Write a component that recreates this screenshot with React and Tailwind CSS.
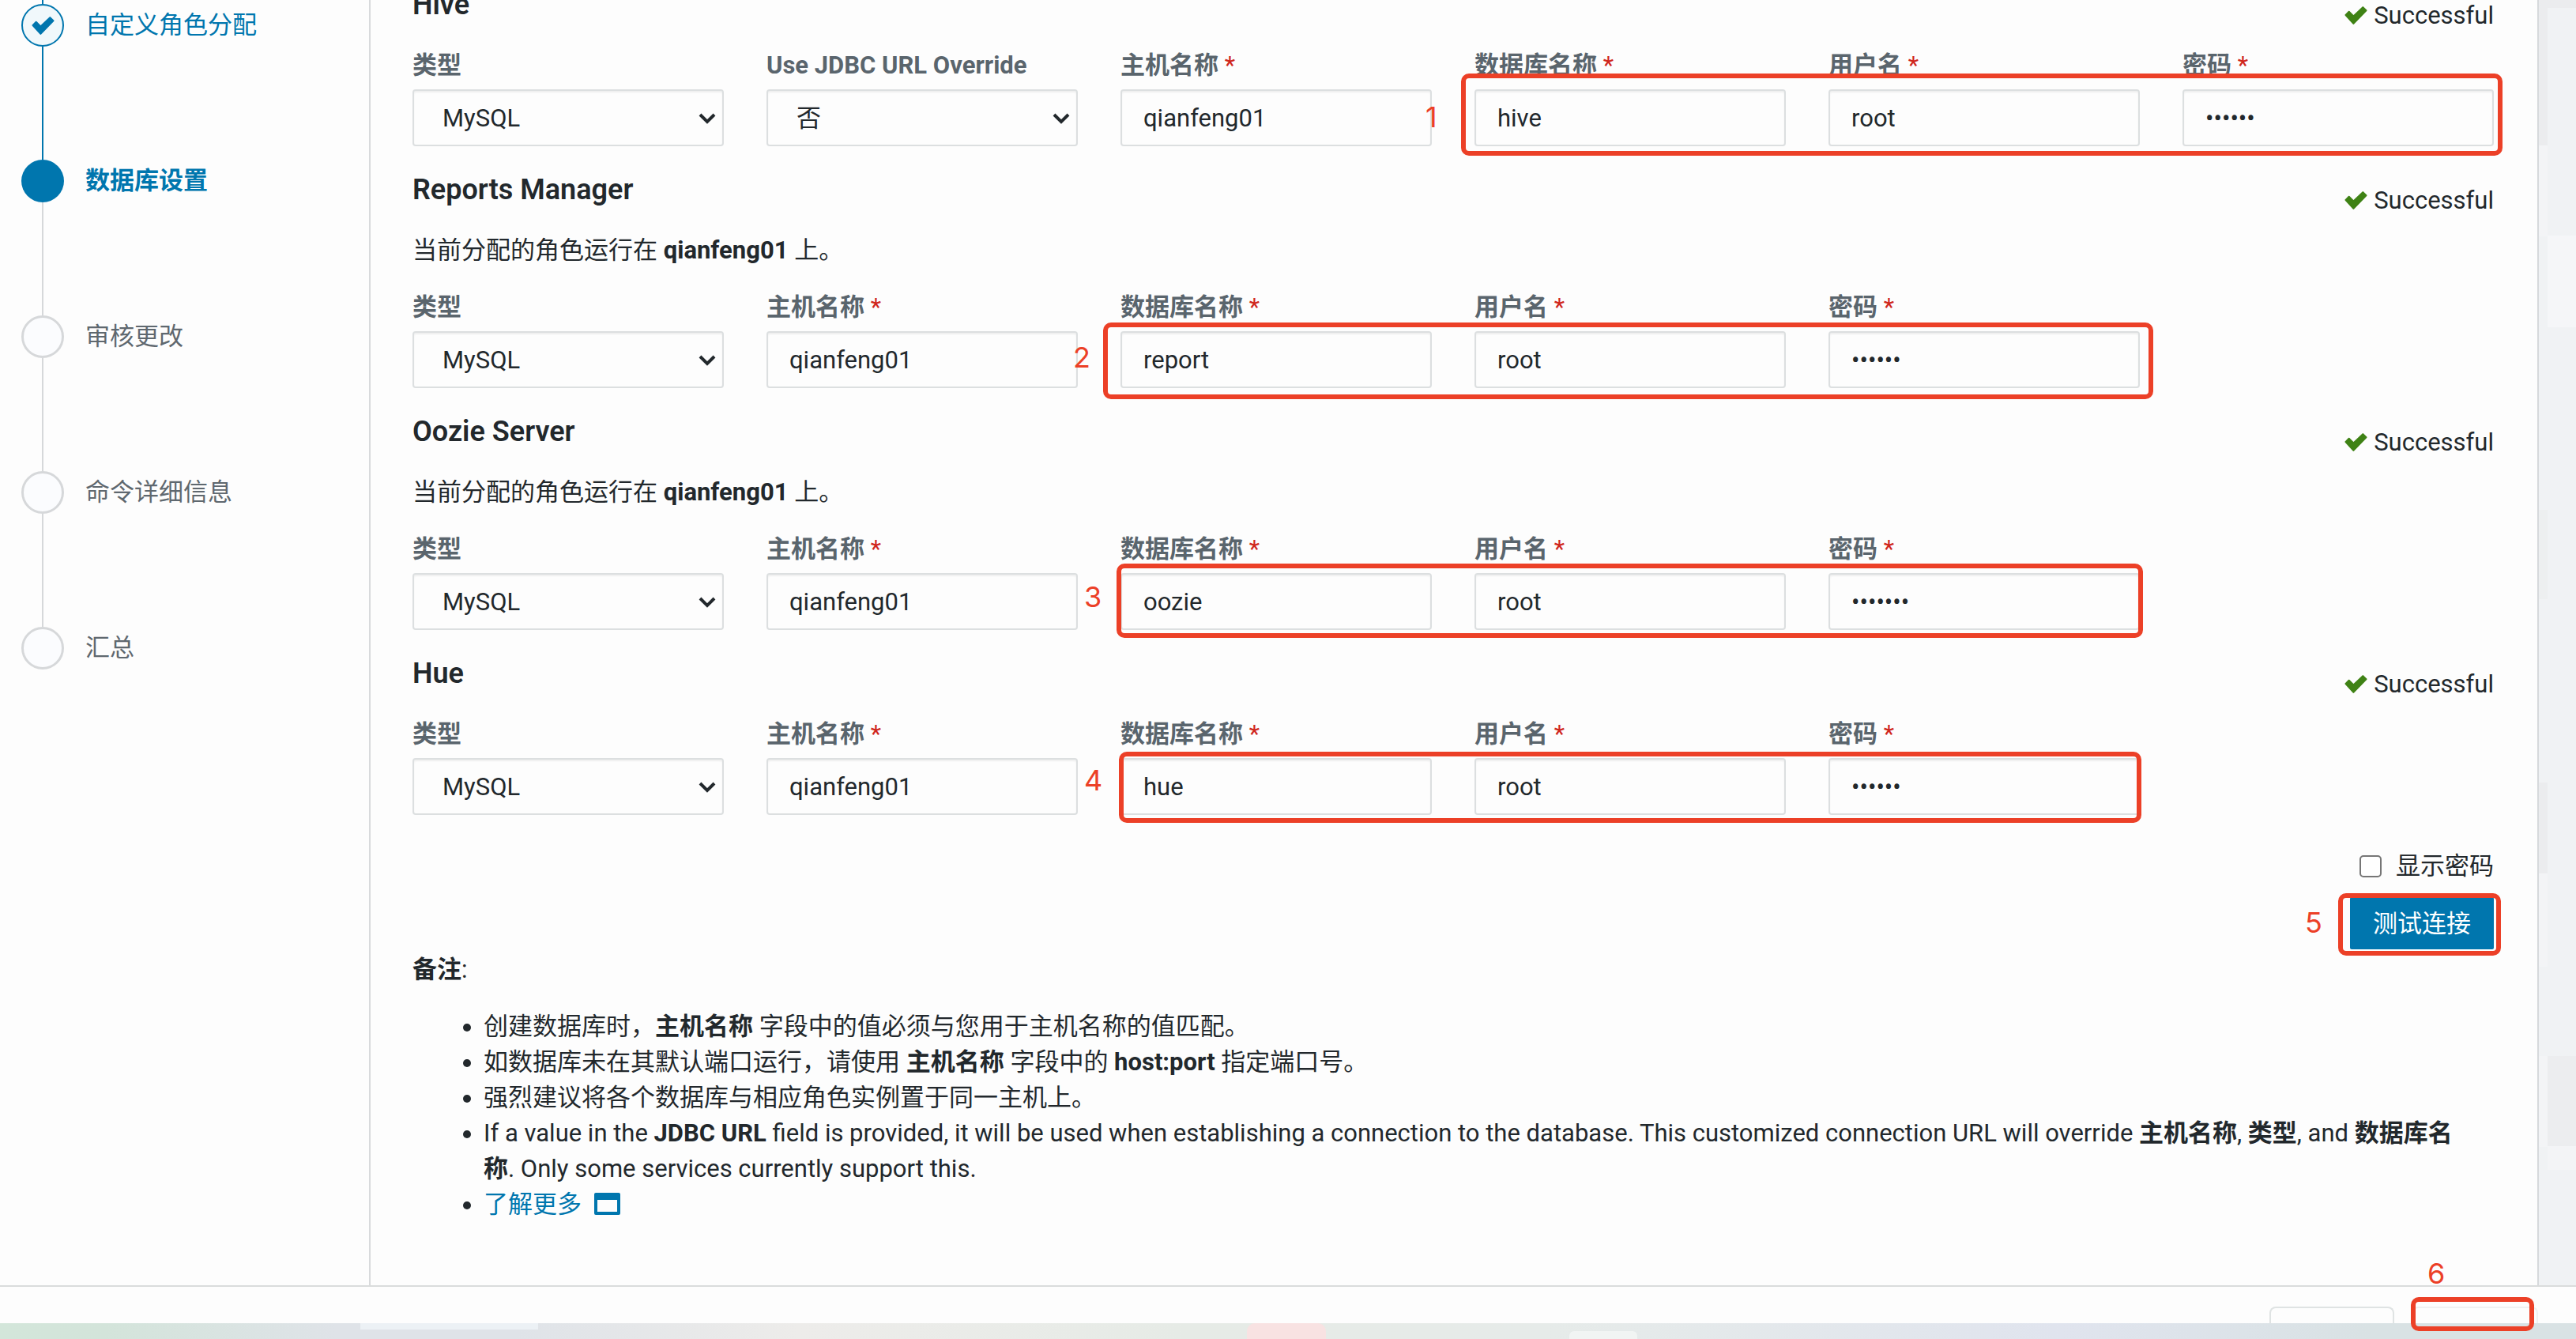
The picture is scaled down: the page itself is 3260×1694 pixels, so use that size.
import { useState } from "react";

const steps = [
    { label: "自定义角色分配", state: "done" },
    { label: "数据库设置", state: "active" },
    { label: "审核更改", state: "todo" },
    { label: "命令详细信息", state: "todo" },
    { label: "汇总", state: "todo" },
];

const services = [
    {
        id: "hive",
        title: "Hive",
        jdbc: true,
        database: "hive",
        user: "root",
        password: "123456",
        mark: "1",
        markClass: "-left-[62px] bottom-[15px]",
        frameClass: "-left-[17px] -right-[11px] -bottom-[12px] h-[104px]",
    },
    {
        id: "reports",
        title: "Reports Manager",
        host: "qianfeng01",
        database: "report",
        user: "root",
        password: "123456",
        mark: "2",
        markClass: "-left-[60px] bottom-[17px]",
        frameClass: "-left-[22px] -right-[17px] -bottom-[14px] h-[97px]",
    },
    {
        id: "oozie",
        title: "Oozie Server",
        host: "qianfeng01",
        database: "oozie",
        user: "root",
        password: "1234567",
        mark: "3",
        markClass: "-left-[46px] bottom-[20px]",
        frameClass: "-left-[5px] -right-[4px] -bottom-[10px] h-[94px]",
    },
    {
        id: "hue",
        title: "Hue",
        database: "hue",
        user: "root",
        password: "123456",
        mark: "4",
        markClass: "-left-[46px] bottom-[22px]",
        frameClass: "-left-[2px] -right-[2px] -bottom-[10px] h-[90px]",
    },
];

function CheckIcon({ className }) {
    return (
        <svg
            viewBox="0 0 28 22"
            className={className}
            fill="currentColor"
            stroke="currentColor"
            strokeWidth="2"
            strokeLinejoin="round"
            aria-hidden="true"
        >
            <path d="M1.5 10.5L5.5 6.5L11 12L22.5 1L26.5 5L11 21Z" />
        </svg>
    );
}

function WindowIcon({ className }) {
    return (
        <svg viewBox="0 0 33 28" className={className} fill="currentColor" aria-hidden="true">
            <path fillRule="evenodd" d="M2 0H31Q33 0 33 2V26Q33 28 31 28H2Q0 28 0 26V2Q0 0 2 0ZM4 9V24H29V9Z" />
        </svg>
    );
}

function Mark({ children, className }) {
    return (
        <span className={`absolute font-[Inter,sans-serif] text-[36px] leading-[44px] text-[#ec4027] ${className}`}>
            {children}
        </span>
    );
}

function Frame({ className }) {
    return (
        <span className={`pointer-events-none absolute rounded-[10px] border-[6px] border-[#ec4027] ${className}`}></span>
    );
}

function Label({ htmlFor, required, children }) {
    return (
        <label htmlFor={htmlFor} className="mb-2 block whitespace-nowrap font-bold text-[#5a656d]">
            {children}
            {required && <span className="font-normal text-[#d0271d]"> *</span>}
        </label>
    );
}

function TextField({ id, label, type, value }) {
    const [text, setText] = useState(value);

    return (
        <div>
            <Label htmlFor={id} required>{label}</Label>
            <input
                id={id}
                type={type || "text"}
                value={text}
                onChange={(event) => setText(event.target.value)}
                className="block h-[72px] w-full rounded-[4px] border-2 border-[#dcdfe0] bg-[#fdfdfd] px-[27px] shadow-[inset_0_2px_2px_rgba(0,0,0,0.06)] outline-none"
            />
        </div>
    );
}

function SelectField({ id, label, options }) {
    return (
        <div>
            <Label htmlFor={id}>{label}</Label>
            <div className="relative">
                <select
                    id={id}
                    className="block h-[72px] w-full appearance-none rounded-[4px] border-2 border-[#dcdfe0] bg-[#fdfdfd] px-9 shadow-[inset_0_2px_2px_rgba(0,0,0,0.06)] outline-none"
                >
                    {options.map((option) => (
                        <option key={option}>{option}</option>
                    ))}
                </select>
                <svg
                    viewBox="0 0 22 14"
                    className="pointer-events-none absolute top-[30px] right-[10px] h-[14px] w-[22px]"
                    fill="none"
                    stroke="#22282c"
                    strokeWidth="4"
                    aria-hidden="true"
                >
                    <path d="M2 2L11 11L20 2" />
                </svg>
            </div>
        </div>
    );
}

function Service({ service, showPassword }) {
    const { id } = service;

    return (
        <section className="pb-[33px]">
            <div className="flex h-[44px] justify-between">
                <h2 className="text-[36px] leading-[44px] font-semibold">{service.title}</h2>
                <p className="mt-[13px] flex h-[45px] items-center gap-2">
                    <CheckIcon className="h-[23px] w-[29px] text-[#3f8215]" />
                    Successful
                </p>
            </div>
            {service.host && (
                <p className="mt-8 -mb-[5px]">
                    当前分配的角色运行在 <b>{service.host}</b> 上。
                </p>
            )}
            <div className="mt-8 grid grid-cols-6 gap-[54px]">
                <SelectField id={`${id}-type`} label="类型" options={["MySQL", "PostgreSQL", "Oracle"]} />
                {service.jdbc && (
                    <SelectField id={`${id}-jdbc`} label="Use JDBC URL Override" options={["否", "是"]} />
                )}
                <TextField id={`${id}-host`} label="主机名称" value="qianfeng01" />
                <div className="relative col-span-3 grid grid-cols-3 gap-[54px]">
                    <TextField id={`${id}-db`} label="数据库名称" value={service.database} />
                    <TextField id={`${id}-user`} label="用户名" value={service.user} />
                    <TextField
                        id={`${id}-password`}
                        label="密码"
                        type={showPassword ? "text" : "password"}
                        value={service.password}
                    />
                    <Frame className={service.frameClass} />
                    <Mark className={service.markClass}>{service.mark}</Mark>
                </div>
            </div>
        </section>
    );
}

function Steps() {
    return (
        <nav className="w-[469px] shrink-0 border-r-2 border-[#d8dadc] pl-[27px]">
            {/* line coming down from the steps above */}
            <div className="ml-[26px] h-[5px] w-[2px] bg-[#0076ae]"></div>
            <ol>
                {steps.map((step, index) => (
                    <li key={step.label} className="flex gap-[27px]">
                        <div className="flex w-[54px] flex-col items-center">
                            {step.state === "done" && (
                                <span className="flex size-[54px] items-center justify-center rounded-full border-2 border-[#0076ae] bg-[#f0f8fb]">
                                    <CheckIcon className="h-[23px] w-[29px] text-[#0076ae]" />
                                </span>
                            )}
                            {step.state === "active" && (
                                <span className="size-[54px] rounded-full bg-[#0076ae]"></span>
                            )}
                            {step.state === "todo" && (
                                <span className="size-[54px] rounded-full border-[3px] border-[#d6d8da] bg-[#fbfcfe]"></span>
                            )}
                            {index < steps.length - 1 && (
                                <span className={`h-[143px] w-[2px] ${step.state === "done" ? "bg-[#0076ae]" : "bg-[#d6d8da]"}`}></span>
                            )}
                        </div>
                        <a
                            href="#"
                            className={`h-[54px] leading-[54px] ${step.state === "active" ? "font-bold text-[#0076ae]" : ""} ${step.state === "done" ? "text-[#0076ae]" : ""} ${step.state === "todo" ? "text-[#5f686f]" : ""}`}
                        >
                            {step.label}
                        </a>
                    </li>
                ))}
            </ol>
        </nav>
    );
}

function Notes() {
    return (
        <div className="mt-[3px]">
            <p>
                <b>备注</b>:
            </p>
            <ul className="mt-[27px] list-disc pr-6 pl-[90px]">
                <li>
                    创建数据库时，<b>主机名称</b> 字段中的值必须与您用于主机名称的值匹配。
                </li>
                <li>
                    如数据库未在其默认端口运行，请使用 <b>主机名称</b> 字段中的 <b>host:port</b> 指定端口号。
                </li>
                <li>强烈建议将各个数据库与相应角色实例置于同一主机上。</li>
                <li>
                    If a value in the <b>JDBC URL</b> field is provided, it will be used when establishing a connection to
                    the database. This customized connection URL will override <b>主机名称</b>, <b>类型</b>, and{" "}
                    <b>数据库名称</b>. Only some services currently support this.
                </li>
                <li>
                    <a href="#" className="text-[#0076ae]">
                        了解更多
                        <WindowIcon className="ml-4 inline-block h-[28px] w-[33px] align-[-3px]" />
                    </a>
                </li>
            </ul>
        </div>
    );
}

// blurred page edge visible beside the dialog
function Backdrop() {
    return (
        <aside className="flex w-[49px] shrink-0 border-l-2 border-[#d6d9dc] bg-[#f0f2f4]">
            <div className="w-[11px]">
                <div className="h-[184px] bg-[#ebecee]"></div>
                <div className="h-[115px] bg-[#f3f4f6]"></div>
                <div className="mt-[346px] h-[113px] bg-[#edeff0]"></div>
                <div className="mt-[232px] h-[115px] bg-[#ebecee]"></div>
                <div className="h-[118px] bg-[#f3f4f6]"></div>
                <div className="mt-[113px] h-[115px] bg-[#f3f4f6]"></div>
            </div>
            <div className="flex-1">
                <div className="h-[10px] bg-[#ebecee]"></div>
                <div className="mt-[288px] h-[116px] bg-[#f5f6f8]"></div>
                <div className="mt-[922px] h-[114px] bg-[#ecedef]"></div>
                <div className="h-[30px] bg-[#f3f4f6]"></div>
            </div>
        </aside>
    );
}

function App() {
    const [showPassword, setShowPassword] = useState(false);

    return (
        <div className="flex h-screen flex-col overflow-hidden bg-[#fdfdfd] font-[Roboto,'Noto_Sans_CJK_SC',sans-serif] text-[31px] leading-[45px] text-[#22282c]">
            <div className="flex min-h-0 flex-1">
                <Steps />
                <main className="min-w-0 flex-1 pr-[55px] pl-[53px]">
                    <div className="-mt-4">
                        {services.map((service) => (
                            <Service key={service.id} service={service} showPassword={showPassword} />
                        ))}
                    </div>
                    <div className="mt-[9px] flex items-center justify-end gap-[18px]">
                        <input
                            id="show-password"
                            type="checkbox"
                            checked={showPassword}
                            onChange={() => setShowPassword(!showPassword)}
                            className="size-[28px] appearance-none rounded-[5px] border-2 border-[#767676] bg-white"
                        />
                        <label htmlFor="show-password">显示密码</label>
                    </div>
                    <div className="mt-[17px] flex justify-end">
                        <div className="relative">
                            <button type="button" className="block h-[66px] rounded-[2px] bg-[#0076ae] px-[29px] text-white">
                                测试连接
                            </button>
                            <Frame className="-top-[5px] -right-[9px] -bottom-[8px] -left-[15px]" />
                            <Mark className="top-[10px] -left-[57px]">5</Mark>
                        </div>
                    </div>
                    <Notes />
                </main>
                <Backdrop />
            </div>
            <footer className="flex h-[48px] shrink-0 items-start justify-end gap-[22px] border-t-2 border-[#dadcdc] pt-[25px] pr-[48px]">
                <button type="button" aria-label="返回" className="h-[21px] w-[158px] rounded-t-[8px] border-2 border-b-0 border-[#dfe3e3]"></button>
                <div className="relative">
                    <button type="button" aria-label="继续" className="block h-[21px] w-[160px] rounded-t-[8px] border-2 border-b-0 border-[#f0f1f1]"></button>
                    <Frame className="-top-[12px] right-[5px] z-10 h-[43px] w-[156px]" />
                    <Mark className="-top-[64px] left-[20px]">6</Mark>
                </div>
            </footer>
            {/* top edge of the taskbar */}
            <div className="flex h-[20px] shrink-0 bg-[linear-gradient(to_right,#d3e6da_0%,#d3e4da_4%,#dfe3e8_13%,#dfe3e8_20%,#edecea_31%,#e6ebe6_46%,#e6ebe9_60%,#e0e4ee_80%,#d9e2e4_92%,#d9e2e4_100%)] pl-[14%]">
                <div className="h-2 w-[8%] bg-[#ecf1f5]"></div>
                <div className="ml-[32%] w-[100px] rounded-t-[10px] bg-[#f8e2e2]"></div>
                <div className="ml-[11%] h-[10px] w-[86px] self-end rounded-t-[6px] bg-[#f1f4f3]"></div>
            </div>
        </div>
    );
}

export default App;
